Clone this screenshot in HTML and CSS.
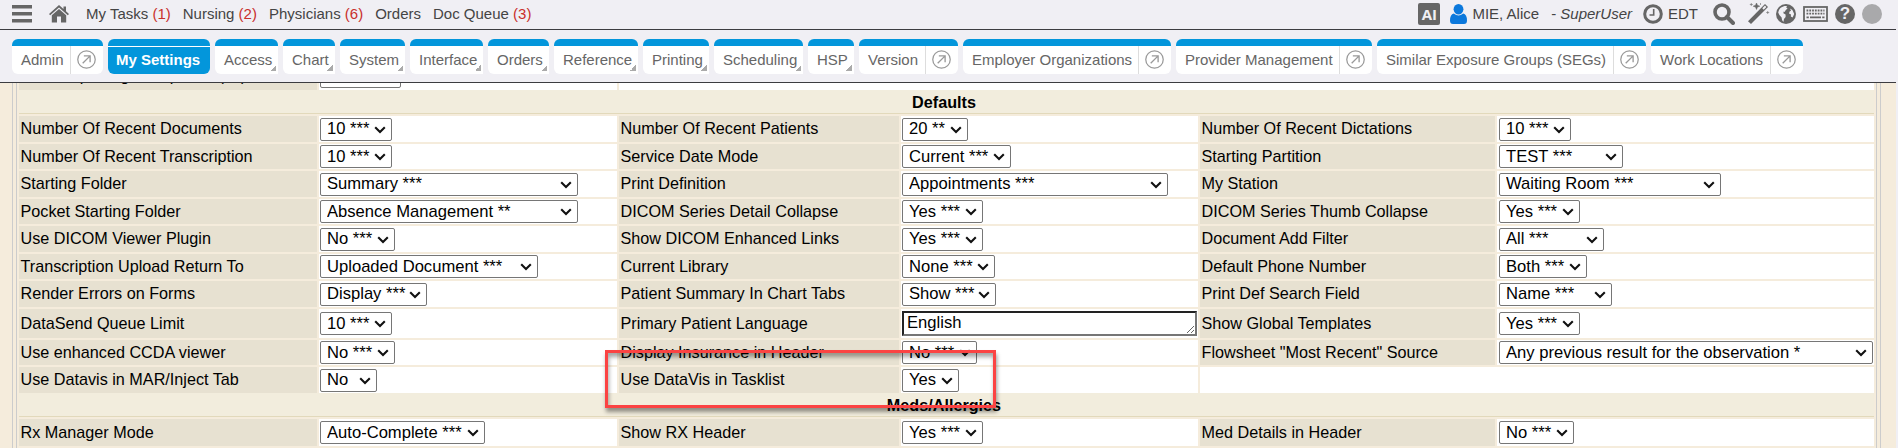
FILE: index.html
```html
<!DOCTYPE html>
<html lang="en">
<head>
    <meta charset="UTF-8">
    <meta name="viewport" content="width=device-width, initial-scale=1.0">
    <title>My Settings</title>
    <link rel="stylesheet" href="styles.css">
</head>
<body>
    <svg class="sprite">
        <symbol id="popout" viewBox="0 0 20 20">
            <circle cx="10" cy="10" r="9.2" fill="none" stroke="#999" stroke-width="1.3"/>
            <path d="M6 14 L13.3 6.7 M7.2 6.2 H13.8 V12.8" fill="none" stroke="#999" stroke-width="1.4"/>
        </symbol>
    </svg>

    <header class="header">
        <div class="topbar">
            <svg class="icon menu" width="20" height="18" viewBox="0 0 20 18"><path d="M0 0h20v3.4H0zM0 7h20v3.4H0zM0 14h20v3.4H0z"/></svg>
            <svg class="icon home" width="20" height="18" viewBox="0 0 20 18"><path d="M10 0 L14.5 4 V1.5 H17 V6.2 L20 9 L18.8 10.3 L10 2.6 L1.2 10.3 L0 9 Z"/><path d="M10 4 L17.2 10.2 V17.5 H12 V11.5 H8 V17.5 H2.8 V10.2 Z"/></svg>
            <nav class="links">
                <a>My Tasks <b>(1)</b></a>
                <a>Nursing <b>(2)</b></a>
                <a>Physicians <b>(6)</b></a>
                <a>Orders</a>
                <a>Doc Queue <b>(3)</b></a>
            </nav>
            <div class="tools">
                <span class="ai">AI</span>
                <svg class="user" width="17" height="20" viewBox="0 0 17 20"><ellipse cx="8.5" cy="5.2" rx="4.9" ry="5.2"/><path d="M3.8 9.5 Q8.5 13.4 13.2 9.5 Q17 10.5 17 16.5 Q17 20 14 20 H3 Q0 20 0 16.5 Q0 10.5 3.8 9.5Z"/></svg>
                <span class="name">MIE, Alice</span>
                <span class="role">- <i>SuperUser</i></span>
                <svg class="clock" width="20" height="20" viewBox="0 0 20 20"><circle cx="10" cy="10" r="8.3" fill="none" stroke="#666" stroke-width="3"/><path d="M10.7 5 V11 H6.5" fill="none" stroke="#666" stroke-width="1.6"/></svg>
                <span class="zone">EDT</span>
                <svg class="icon search" width="22" height="22" viewBox="0 0 22 22"><circle cx="9" cy="9" r="7" fill="none" stroke="#666" stroke-width="3.6"/><path d="M14 14 L20 20" stroke="#666" stroke-width="4" stroke-linecap="round"/></svg>
                <svg class="icon wand" width="22" height="21" viewBox="0 0 22 21"><path d="M0 18.2 L17 1 L20 4 L3 21Z"/><path d="M14.3 5.3 L17 2.6 L18.4 4 L15.7 6.7Z" fill="#f0eff4"/><path d="M8.5 0 L9.4 2.3 L11.7 3.2 L9.4 4.1 L8.5 6.4 L7.6 4.1 L5.3 3.2 L7.6 2.3Z M3.3 0v3M1.8 1.5h3M12.5 0v2M19.7 8v3M18.2 9.5h3" stroke="#666" stroke-width=".6"/></svg>
                <svg class="icon globe" width="20" height="20" viewBox="0 0 20 20"><circle cx="10" cy="10" r="10"/><path d="M8.5 2 L11 2 L10.2 3.6 L11.6 4.6 L9.8 6 L8.6 8 L7.6 7.4 L7.4 9.2 L9.6 10.6 L9.6 13 L8 15 L7.4 18 Q5.6 16.6 5.6 13.6 L3.4 11 L2.2 8.6 Q3 4.4 5.6 3.2Z M14 4.6 L16.4 6 L18.2 10 L16.6 13.4 L14.8 12.6 L15 10.6 L13 9.4 L13.6 7.4 L15 6.8Z" fill="#f0eff4"/></svg>
                <svg class="icon keyboard" width="25" height="16" viewBox="0 0 25 16"><rect x="1" y="1" width="23" height="14" fill="none" stroke="#666" stroke-width="1.8"/><path d="M3.5 4.5h18M3.5 7.7h18" stroke="#666" stroke-width="1.8" stroke-dasharray="1.8 1"/><path d="M3.5 11.3h2.3M7 11.3h11M19.2 11.3h2.3" stroke="#666" stroke-width="1.8"/></svg>
                <span class="help">?</span>
                <span class="status"></span>
            </div>
        </div>
        <nav class="tabs">
            <div class="tab w91"><span>Admin</span><svg><use href="#popout"/></svg></div>
            <div class="tab w102 active"><span>My Settings</span></div>
            <div class="tab w63 more"><span>Access</span></div>
            <div class="tab w52 more"><span>Chart</span></div>
            <div class="tab w65 more"><span>System</span></div>
            <div class="tab w73 more"><span>Interface</span></div>
            <div class="tab w61 more"><span>Orders</span></div>
            <div class="tab w84 more"><span>Reference</span></div>
            <div class="tab w66 more"><span>Printing</span></div>
            <div class="tab w89 more"><span>Scheduling</span></div>
            <div class="tab w46 more"><span>HSP</span></div>
            <div class="tab w99"><span>Version</span><svg><use href="#popout"/></svg></div>
            <div class="tab w208"><span>Employer Organizations</span><svg><use href="#popout"/></svg></div>
            <div class="tab w196"><span>Provider Management</span><svg><use href="#popout"/></svg></div>
            <div class="tab w269"><span>Similar Exposure Groups (SEGs)</span><svg><use href="#popout"/></svg></div>
            <div class="tab w152"><span>Work Locations</span><svg><use href="#popout"/></svg></div>
        </nav>
    </header>

    <main class="page">
        <div class="panel">
            <div class="settings">
                <label class="cut">User Reporting Group Max (Hr)</label>
                <div class="cut"><select class="s81"><option></option></select></div>
                <div class="cut wide"></div>

                <h2>Defaults</h2>

                <label>Number Of Recent Documents</label>
                <div><select class="s72"><option>10 ***</option></select></div>
                <label>Number Of Recent Patients</label>
                <div><select class="s66"><option>20 **</option></select></div>
                <label>Number Of Recent Dictations</label>
                <div class="last"><select class="s72"><option>10 ***</option></select></div>

                <label>Number Of Recent Transcription</label>
                <div><select class="s72"><option>10 ***</option></select></div>
                <label>Service Date Mode</label>
                <div><select class="s109"><option>Current ***</option></select></div>
                <label>Starting Partition</label>
                <div class="last"><select class="s124"><option>TEST ***</option></select></div>

                <label>Starting Folder</label>
                <div><select class="s258"><option>Summary ***</option></select></div>
                <label>Print Definition</label>
                <div><select class="s266"><option>Appointments ***</option></select></div>
                <label>My Station</label>
                <div class="last"><select class="s222"><option>Waiting Room ***</option></select></div>

                <label>Pocket Starting Folder</label>
                <div><select class="s258"><option>Absence Management **</option></select></div>
                <label>DICOM Series Detail Collapse</label>
                <div><select class="s81"><option>Yes ***</option></select></div>
                <label>DICOM Series Thumb Collapse</label>
                <div class="last"><select class="s81"><option>Yes ***</option></select></div>

                <label>Use DICOM Viewer Plugin</label>
                <div><select class="s75"><option>No ***</option></select></div>
                <label>Show DICOM Enhanced Links</label>
                <div><select class="s81"><option>Yes ***</option></select></div>
                <label>Document Add Filter</label>
                <div class="last"><select class="s105"><option>All ***</option></select></div>

                <label>Transcription Upload Return To</label>
                <div><select class="s218"><option>Uploaded Document ***</option></select></div>
                <label>Current Library</label>
                <div><select class="s93"><option>None ***</option></select></div>
                <label>Default Phone Number</label>
                <div class="last"><select class="s88"><option>Both ***</option></select></div>

                <label>Render Errors on Forms</label>
                <div><select class="s107"><option>Display ***</option></select></div>
                <label>Patient Summary In Chart Tabs</label>
                <div><select class="s94"><option>Show ***</option></select></div>
                <label>Print Def Search Field</label>
                <div class="last"><select class="s113"><option>Name ***</option></select></div>

                <label>DataSend Queue Limit</label>
                <div><select class="s72"><option>10 ***</option></select></div>
                <label>Primary Patient Language</label>
                <div><textarea rows="1">English</textarea></div>
                <label>Show Global Templates</label>
                <div class="last"><select class="s81"><option>Yes ***</option></select></div>

                <label>Use enhanced CCDA viewer</label>
                <div><select class="s75"><option>No ***</option></select></div>
                <label>Display Insurance in Header</label>
                <div><select class="s75"><option>No ***</option></select></div>
                <label>Flowsheet "Most Recent" Source</label>
                <div class="last"><select class="s374"><option>Any previous result for the observation *</option></select></div>

                <label>Use Datavis in MAR/Inject Tab</label>
                <div><select class="s57"><option>No</option></select></div>
                <label>Use DataVis in Tasklist</label>
                <div><select class="s57"><option>Yes</option></select></div>
                <div class="empty"></div>

                <h2>Meds/Allergies</h2>

                <label>Rx Manager Mode</label>
                <div><select class="s165"><option>Auto-Complete ***</option></select></div>
                <label>Show RX Header</label>
                <div><select class="s81"><option>Yes ***</option></select></div>
                <label>Med Details in Header</label>
                <div class="last"><select class="s75"><option>No ***</option></select></div>

                <label></label><div></div><label></label><div></div><label></label><div></div>
            </div>
        </div>
        <div class="highlight"></div>
    </main>
</body>
</html>
```
FILE: styles.css
```css
* {
    box-sizing: border-box;
}
body {
    margin: 0;
    height: 448px;
    overflow: hidden;
    padding-right: 2px;
    background: #f0eff4;
    color: #000;
    font-family: Arial, "Liberation Sans", sans-serif;
    font-size: 16.2px;
}
.sprite {
    display: none;
}

/* top bar */
.header {
    height: 83px;
    background: #f0eff4;
    border-bottom: 1px solid #3c3c40;
    font-size: 15px;
}
.topbar {
    display: flex;
    align-items: center;
    height: 30px;
    padding: 0 14px 2px 12px;
    border-bottom: 1px solid #3c3c40;
    color: #444;
}
.topbar svg {
    flex: none;
}
.icon {
    fill: #666;
}
.home {
    margin-left: 17px;
}
.links {
    display: flex;
    gap: 12px;
    margin-left: 17px;
}
.links b {
    font-weight: normal;
    color: #c9302c;
}
.tools {
    display: flex;
    align-items: center;
    margin-left: auto;
}
.ai {
    width: 22px;
    height: 22px;
    border-radius: 2px;
    background: #666;
    color: #f0eff4;
    font: bold 15px/22px "Open Sans", sans-serif;
    text-align: center;
}
.user {
    margin: 0 5px 0 10px;
    fill: #0b78dc;
}
.role {
    margin: 0 11px 0 12px;
    white-space: pre;
}
.clock {
    margin-right: 5px;
}
.search {
    margin-left: 15px;
}
.wand {
    margin-left: 13px;
}
.globe {
    margin-left: 6px;
}
.keyboard {
    margin-left: 7px;
}
.help {
    width: 20px;
    height: 20px;
    margin-left: 7px;
    border-radius: 50%;
    background: #666;
    color: #f0eff4;
    font: bold 17px/20px Arial, "Liberation Sans", sans-serif;
    text-align: center;
}
.status {
    width: 20px;
    height: 20px;
    margin-left: 7px;
    border-radius: 50%;
    background: #a9a9ab;
}

/* tabs */
.tabs {
    display: flex;
    gap: 5px;
    padding: 9px 12px 0;
}
.tab {
    display: flex;
    flex: none;
    height: 35px;
    border-top: 7px solid #0396db;
    border-radius: 6px;
    background: #fff;
    color: #666;
    line-height: 27px;
    white-space: nowrap;
}
.tab span {
    flex: 1;
    padding-left: 9px;
}
.tab svg {
    width: 33px;
    height: 28px;
    padding: 4px 7px 5px 6px;
    border-left: 1px solid #ddd;
}
.active {
    background: linear-gradient(#fff 1px, #0396db 1px);
    color: #fff;
    font-weight: bold;
}
.active span {
    padding-left: 8px;
}
.more {
    border-bottom-right-radius: 0;
    background: linear-gradient(135deg, transparent 50%, #aaa 50%) right 2px bottom 3px / 6px 6px no-repeat #fff;
}
.w46 { width: 46px; }
.w52 { width: 52px; }
.w61 { width: 61px; }
.w63 { width: 63px; }
.w65 { width: 65px; }
.w66 { width: 66px; }
.w73 { width: 73px; }
.w84 { width: 84px; }
.w89 { width: 89px; }
.w91 { width: 91px; }
.w99 { width: 99px; }
.w102 { width: 102px; }
.w152 { width: 152px; }
.w196 { width: 196px; }
.w208 { width: 208px; }
.w269 { width: 269px; }

/* settings */
.page {
    position: relative;
    height: 365px;
    padding: 0 15px 0 12px;
    background: #f5ecdc;
    overflow: hidden;
}
.panel {
    padding: 0 3px;
    border: solid #ccc;
    border-width: 0 1px;
}
.settings {
    display: grid;
    grid-template-columns: 298px 298px 280px 297px 295px 377px;
    grid-template-rows: 7px 22px 26px 25px 26px 25px 26px 25px 26px 29px 25px 26px 22px 27px 27px;
    gap: 2px;
    padding: 0 1px 0 2px;
    border: solid #ccc;
    border-width: 0 1px;
}
.settings label {
    display: flex;
    align-items: center;
    padding: 0 1.5px 1px;
    background: #e7e1d1;
    white-space: nowrap;
}
.settings div {
    display: flex;
    align-items: center;
    padding-left: 1px;
    background: #fff;
}
.settings .last {
    padding-left: 2px;
}
.settings .cut {
    align-items: flex-end;
    height: 7px;
    padding-bottom: 2px;
}
.settings label.cut {
    padding-bottom: 5px;
}
.settings .wide {
    grid-column: span 4;
}
.settings .empty {
    grid-column: span 2;
}
.settings h2 {
    grid-column: 1 / -1;
    margin: -2px 0 0;
    padding-right: 5px;
    border-bottom: 1px solid #e2d9bb;
    background: #f2eddd;
    font-size: 16.2px;
    line-height: 24px;
    text-align: center;
}
select {
    appearance: none;
    height: 23px;
    padding: 0 0 1px 6px;
    border: 1px solid #767676;
    border-radius: 2px;
    background: #fff url("data:image/svg+xml,%3Csvg xmlns='http://www.w3.org/2000/svg' width='12' height='8'%3E%3Cpath d='M1.2 1.3L6 6L10.8 1.3' fill='none' stroke='%23111' stroke-width='2.1'/%3E%3C/svg%3E") right 5px top 7px no-repeat;
    color: #000;
    font: 16.6px Arial, "Liberation Sans", sans-serif;
}
textarea {
    width: 295px;
    height: 25px;
    padding: 0 3px;
    border: 2px solid #222;
    border-right-color: #767676;
    border-bottom-color: #767676;
    font: 16.6px/19px Arial, "Liberation Sans", sans-serif;
    overflow: hidden;
}
.s57 { width: 57px; }
.s66 { width: 66px; }
.s72 { width: 72px; }
.s75 { width: 75px; }
.s81 { width: 81px; }
.s88 { width: 88px; }
.s93 { width: 93px; }
.s94 { width: 94px; }
.s105 { width: 105px; }
.s107 { width: 107px; }
.s109 { width: 109px; }
.s113 { width: 113px; }
.s124 { width: 124px; }
.s165 { width: 165px; }
.s218 { width: 218px; }
.s222 { width: 222px; }
.s258 { width: 258px; }
.s266 { width: 266px; }
.s374 { width: 374px; }

/* callout over the tasklist setting */
.highlight {
    position: absolute;
    left: 605px;
    top: 267px;
    width: 391px;
    height: 58px;
    border: 3px solid #fb4343;
    box-shadow: 1px 4px 4px rgba(0, 0, 0, .4), inset 1px 4px 4px rgba(0, 0, 0, .35);
}
```
